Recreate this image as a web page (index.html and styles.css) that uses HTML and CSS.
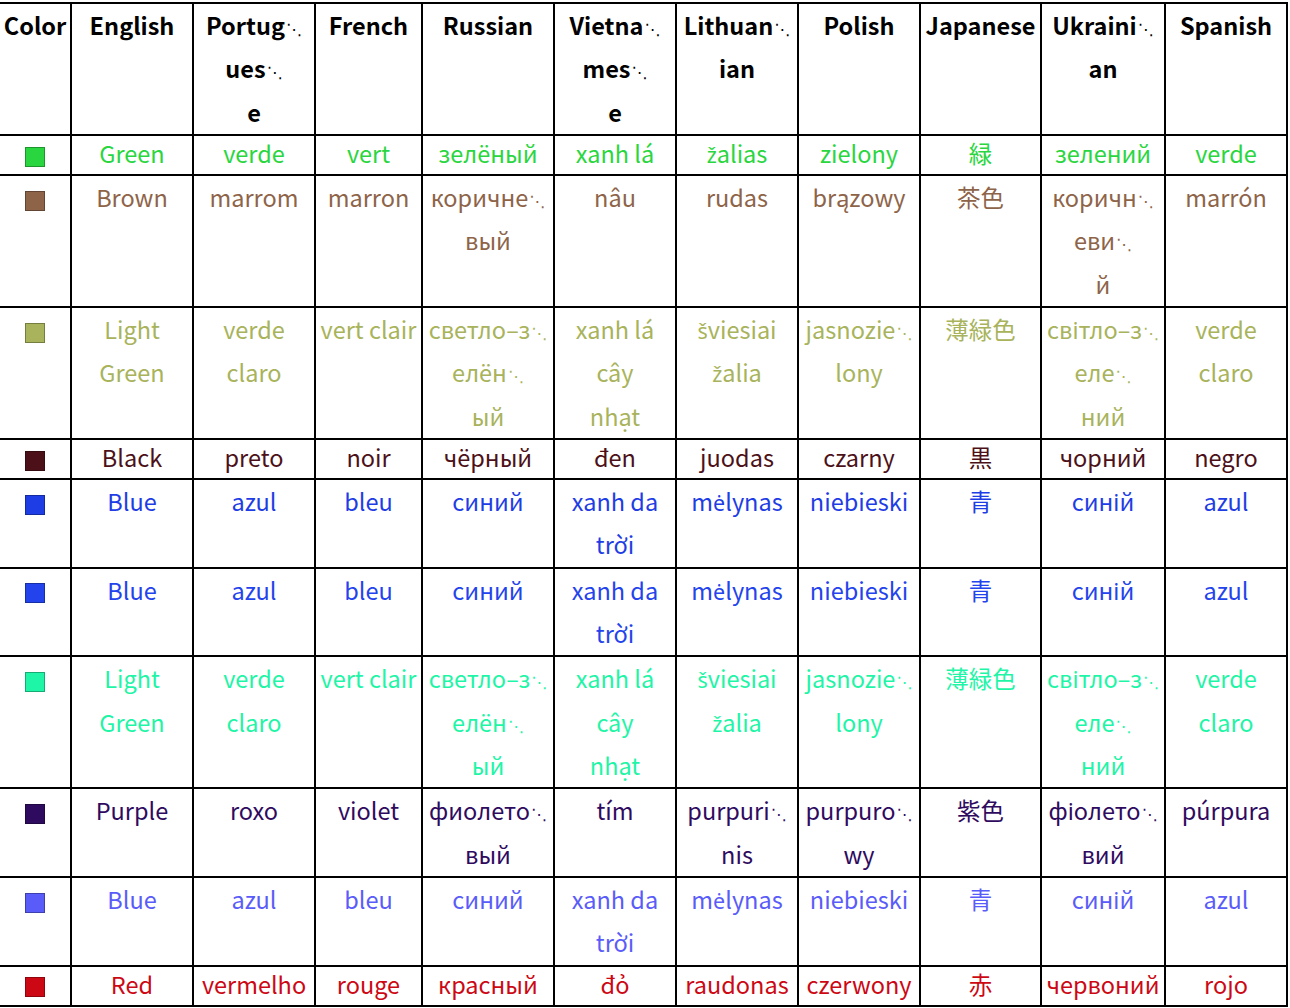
FILE: index.html
```html
<!DOCTYPE html>
<html lang="en">
<head>
<meta charset="utf-8">
<title>Colors</title>
<link rel="stylesheet" href="styles.css">
</head>
<body>
<table class="colors">
  <colgroup>
    <col class="w-color"><col class="w-122"><col class="w-122"><col class="w-107"><col class="w-132"><col class="w-122"><col class="w-122"><col class="w-122"><col class="w-121"><col class="w-124"><col class="w-122">
  </colgroup>
  <thead>
    <tr class="l3">
      <th>Color</th><th>English</th><th>Portug<span class="hy">⋱</span><br>ues<span class="hy">⋱</span><br>e</th><th>French</th><th>Russian</th><th>Vietna<span class="hy">⋱</span><br>mes<span class="hy">⋱</span><br>e</th><th>Lithuan<span class="hy">⋱</span><br>ian</th><th>Polish</th><th>Japanese</th><th>Ukraini<span class="hy">⋱</span><br>an</th><th>Spanish</th>
    </tr>
  </thead>
  <tbody>
    <tr class="l1 green">
      <td><span class="sw"></span></td><td>Green</td><td>verde</td><td>vert</td><td>зелёный</td><td>xanh lá</td><td><span class="lt">ž</span>alias</td><td>zielony</td><td>緑</td><td>зелений</td><td>verde</td>
    </tr>
    <tr class="brown">
      <td><span class="sw"></span></td><td>Brown</td><td>marrom</td><td>marron</td><td>коричне<span class="hy">⋱</span><br>вый</td><td>nâu</td><td>rudas</td><td>brązowy</td><td>茶色</td><td>коричн<span class="hy">⋱</span><br>еви<span class="hy">⋱</span><br>й</td><td>marrón</td>
    </tr>
    <tr class="olive">
      <td><span class="sw"></span></td><td>Light<br>Green</td><td>verde<br>claro</td><td>vert clair</td><td>светло–з<span class="hy">⋱</span><br>елён<span class="hy">⋱</span><br>ый</td><td>xanh lá<br>cây<br>nhạt</td><td><span class="lt">š</span>viesiai<br><span class="lt">ž</span>alia</td><td>jasnozie<span class="hy">⋱</span><br>lony</td><td>薄緑色</td><td>світло–з<span class="hy">⋱</span><br>еле<span class="hy">⋱</span><br>ний</td><td>verde<br>claro</td>
    </tr>
    <tr class="l1 black">
      <td><span class="sw"></span></td><td>Black</td><td>preto</td><td>noir</td><td>чёрный</td><td>đen</td><td>juodas</td><td>czarny</td><td>黒</td><td>чорний</td><td>negro</td>
    </tr>
    <tr class="blue">
      <td><span class="sw"></span></td><td>Blue</td><td>azul</td><td>bleu</td><td>синий</td><td>xanh da<br>trời</td><td>m<span class="lt">ė</span>lynas</td><td>niebieski</td><td>青</td><td>синій</td><td>azul</td>
    </tr>
    <tr class="blue2">
      <td><span class="sw"></span></td><td>Blue</td><td>azul</td><td>bleu</td><td>синий</td><td>xanh da<br>trời</td><td>m<span class="lt">ė</span>lynas</td><td>niebieski</td><td>青</td><td>синій</td><td>azul</td>
    </tr>
    <tr class="mint">
      <td><span class="sw"></span></td><td>Light<br>Green</td><td>verde<br>claro</td><td>vert clair</td><td>светло–з<span class="hy">⋱</span><br>елён<span class="hy">⋱</span><br>ый</td><td>xanh lá<br>cây<br>nhạt</td><td><span class="lt">š</span>viesiai<br><span class="lt">ž</span>alia</td><td>jasnozie<span class="hy">⋱</span><br>lony</td><td>薄緑色</td><td>світло–з<span class="hy">⋱</span><br>еле<span class="hy">⋱</span><br>ний</td><td>verde<br>claro</td>
    </tr>
    <tr class="purple">
      <td><span class="sw"></span></td><td>Purple</td><td>roxo</td><td>violet</td><td>фиолето<span class="hy">⋱</span><br>вый</td><td>tím</td><td>purpuri<span class="hy">⋱</span><br>nis</td><td>purpuro<span class="hy">⋱</span><br>wy</td><td>紫色</td><td>фіолето<span class="hy">⋱</span><br>вий</td><td>púrpura</td>
    </tr>
    <tr class="blue3">
      <td><span class="sw"></span></td><td>Blue</td><td>azul</td><td>bleu</td><td>синий</td><td>xanh da<br>trời</td><td>m<span class="lt">ė</span>lynas</td><td>niebieski</td><td>青</td><td>синій</td><td>azul</td>
    </tr>
    <tr class="l1 red">
      <td><span class="sw"></span></td><td>Red</td><td>vermelho</td><td>rouge</td><td>красный</td><td>đỏ</td><td>raudonas</td><td>czerwony</td><td>赤</td><td>червоний</td><td>rojo</td>
    </tr>
  </tbody>
</table>
</body>
</html>
```

FILE: styles.css
```css
html, body {
  margin: 0;
  padding: 0;
  background: #ffffff;
}

body {
  font-family: "Noto Sans CJK JP", "Noto Sans", sans-serif;
  font-size: 23.5px;
}

.colors {
  margin-top: 2px;
  border-collapse: collapse;
  table-layout: fixed;
  width: 1288px;
}

.w-color { width: 71px; }
.w-107 { width: 107px; }
.w-121 { width: 121px; }
.w-122 { width: 122px; }
.w-124 { width: 124px; }
.w-132 { width: 132px; }

.colors th,
.colors td {
  border: 2px solid #000;
  padding: 0;
  text-align: center;
  vertical-align: top;
  line-height: 43.33px;
  white-space: nowrap;
  overflow: visible;
}

.colors th:first-child,
.colors td:first-child {
  border-left: none;
}

.colors th {
  font-weight: 700;
  color: #000;
}

.colors tr.l1 td {
  line-height: 35px;
  padding-bottom: 3px;
}

.lt {
  display: inline-block;
  line-height: 1;
  font-family: "Noto Sans", sans-serif;
  font-size: 21.5px;
}

.hy {
  display: inline-block;
  line-height: 1;
  font-family: "DejaVu Sans", sans-serif;
  font-size: 16px;
  font-weight: 400;
  margin-left: 1px;
}

.sw {
  display: inline-block;
  width: 18px;
  height: 18px;
  border: 1px solid rgba(0, 0, 0, 0.3);
  background: currentColor;
  vertical-align: middle;
}

.green { color: #2ad640; }
.brown { color: #8e6449; }
.olive { color: #a8b35b; }
.black { color: #4c1118; }
.blue { color: #1e3de4; }
.blue2 { color: #2343ec; }
.mint { color: #1ff5a6; }
.purple { color: #2f0b5f; }
.blue3 { color: #5a5cf9; }
.red { color: #cc0814; }
```
